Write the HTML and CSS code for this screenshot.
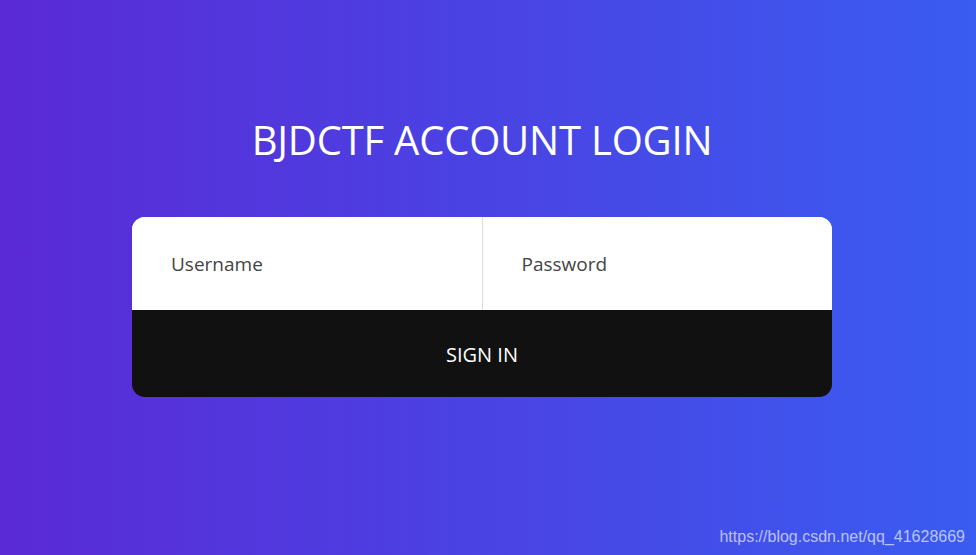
FILE: index.html
```html
<!DOCTYPE html>
<html lang="en">
<head>
  <meta charset="UTF-8">
  <meta name="viewport" content="width=device-width, initial-scale=1.0">
  <title>BJDCTF Account Login</title>
  <link rel="stylesheet" href="styles.css">
</head>
<body>

  <!-- Login box -->
  <div class="page">
    <h1 class="title">BJDCTF ACCOUNT LOGIN</h1>
    <form class="login" onsubmit="return false">
      <div class="fields">
        <input type="text" class="field" placeholder="Username">
        <input type="password" class="field" placeholder="Password">
      </div>
      <button type="submit" class="submit">SIGN IN</button>
    </form>
  </div>

  <div class="watermark">https://blog.csdn.net/qq_41628669</div>

</body>
</html>
```

FILE: styles.css
```css
html, body {
  height: 100%;
}

body {
  margin: 0;
  font-family: "Open Sans", "Noto Sans", sans-serif;
  background: linear-gradient(to right, #5a2ad6, #3a5cf0);
  overflow: hidden;
}

.page {
  display: flex;
  flex-direction: column;
  align-items: center;
  padding-top: 112px;
  padding-right: 12px;
}

.title {
  margin: 0;
  color: #fff;
  font-weight: 400;
  font-size: 40px;
  line-height: 56px;
  letter-spacing: -0.2px;
}

/* Form box */
.login {
  width: 700px;
  margin-top: 49px;
  border-radius: 13px;
  overflow: hidden;
}

.fields {
  display: flex;
  background: #fff;
}

.field {
  flex: 1;
  height: 93px;
  border: none;
  padding: 0 0 0 39px;
  font-family: inherit;
  font-size: 19px;
  color: #444;
  background: #fff;
  outline: none;
  min-width: 0;
}

.field + .field {
  border-left: 1px solid #ddd;
}

.field::placeholder {
  color: #444;
}

.submit {
  display: block;
  width: 100%;
  height: 87px;
  border: none;
  background: #111;
  color: #fff;
  font-family: inherit;
  font-size: 20px;
  padding-top: 2px;
  cursor: pointer;
}

.watermark {
  position: absolute;
  right: 11px;
  bottom: 9px;
  font-family: "Liberation Sans", Arial, sans-serif;
  font-size: 16px;
  color: rgba(255, 255, 255, 0.65);
}
```
